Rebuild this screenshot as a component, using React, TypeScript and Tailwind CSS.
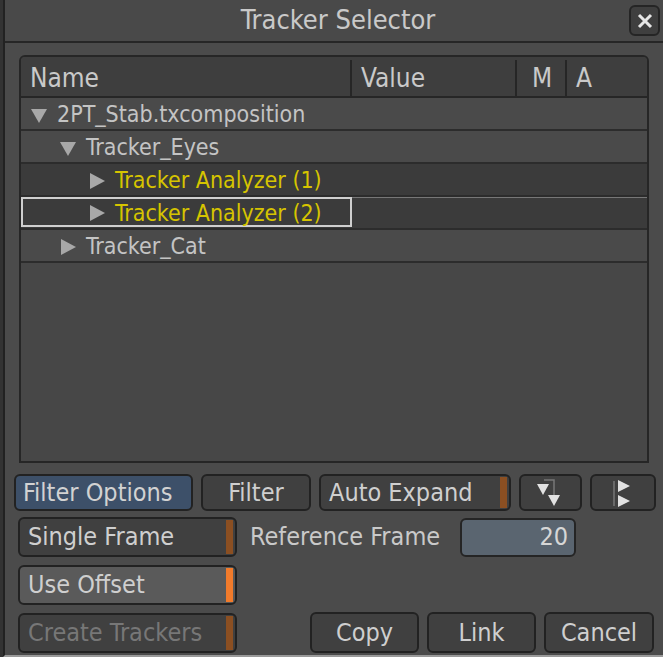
import React from 'react';

type Row = {
  label: string;
  depth: number;
  open: boolean;
  tracker?: boolean;
  selected?: boolean;
};

const rows: Row[] = [
  { label: '2PT_Stab.txcomposition', depth: 0, open: true },
  { label: 'Tracker_Eyes', depth: 1, open: true },
  { label: 'Tracker Analyzer (1)', depth: 2, open: false, tracker: true },
  { label: 'Tracker Analyzer (2)', depth: 2, open: false, tracker: true, selected: true },
  { label: 'Tracker_Cat', depth: 1, open: false },
];

const font = "font-['Liberation_Sans_Narrow','DejaVu_Sans_Condensed',sans-serif]";

const Arrow = ({ open }: { open: boolean }) => (
  <svg width="18" height="18" viewBox="0 0 18 18" className="shrink-0">
    {open ? (
      <polygon points="1,3 17,3 9,17" fill="#a8a8a8" />
    ) : (
      <polygon points="2,1 17,9 2,17" fill="#a8a8a8" />
    )}
  </svg>
);

const Toggle = ({
  label,
  on,
  dim,
  light,
}: {
  label: string;
  on?: boolean;
  dim?: boolean;
  light?: boolean;
}) => (
  <button
    className={`flex h-[40px] w-[219px] shrink-0 items-center justify-between rounded-md border-2 border-[#222] pl-2 pr-[2px] ${
      light ? 'bg-[#5a5a5a]' : 'bg-[#404040]'
    }`}
  >
    <span className={`text-[25px] ${dim ? 'text-[#777]' : 'text-[#cfcfcf]'}`}>{label}</span>
    <span className={`h-[34px] w-[7px] ${on ? 'bg-[#f27b2b]' : 'bg-[#8b4f22]'}`} />
  </button>
);

const Btn = ({ label, w }: { label: string; w: string }) => (
  <button
    className={`flex h-[41px] items-center justify-center rounded-md border-2 border-[#222] bg-[#404040] text-[25px] text-[#cfcfcf] ${w}`}
  >
    {label}
  </button>
);

export default function App() {
  return (
    <div className={`h-[657px] w-[663px] overflow-hidden bg-[#333] pl-[3px] ${font}`}>
      <div className="flex h-full flex-col border-b-2 border-l-2 border-b-[#9a9a9a] border-l-[#222] bg-[#4b4b4b]">
        {/* title bar */}
        <div className="grid h-[43px] shrink-0 grid-cols-[1fr_auto_1fr] items-center border-b-2 border-[#262626] bg-[#494949]">
          <div />
          <div className="pl-[8px] text-[27px] text-[#c9c9c9]">Tracker Selector</div>
          <div className="flex justify-end pr-[3px]">
            <button className="flex h-[31px] w-[31px] items-center justify-center rounded-md border-2 border-[#252525] bg-[#3f3f3f]">
              <svg width="16" height="16" viewBox="0 0 16 16">
                <path d="M2 2 L14 14 M14 2 L2 14" stroke="#e6e6e6" strokeWidth="3" />
              </svg>
            </button>
          </div>
        </div>

        {/* tree */}
        <div className="mx-[14px] mt-[12px] flex h-[408px] flex-col overflow-hidden rounded-t-md border-2 border-[#262626] bg-[#474747]">
          <div className="flex h-[41px] shrink-0 border-b-2 border-[#262626] bg-[#3e3e3e] pt-[3px] text-[26px] text-[#c9c9c9]">
            <div className="flex w-[331px] items-center border-r-2 border-[#262626] pl-[9px]">Name</div>
            <div className="flex w-[165px] items-center border-r-2 border-[#262626] pl-[9px]">Value</div>
            <div className="flex w-[50px] items-center border-r-2 border-[#262626] pl-[15px]">M</div>
            <div className="flex flex-1 items-center pl-[9px]">A</div>
          </div>
          {rows.map((r) => (
            <div
              key={r.label}
              className={`relative h-[33px] shrink-0 border-b-2 border-[#2c2c2c] ${
                r.tracker ? 'bg-[#3b3b3b]' : 'bg-[#4a4a4a]'
              } ${r.selected ? 'border-t border-t-[#777]' : ''}`}
            >
              <div
                className={`flex h-full w-[331px] items-center gap-[9px] pt-[2px] ${
                  r.selected ? 'absolute left-0 top-[-1px] h-[33px] border-2 border-[#cfcfcf]' : ''
                }`}
                style={{ paddingLeft: 9 + r.depth * 29 - (r.selected ? 2 : 0) }}
              >
                <Arrow open={r.open} />
                <span className={`text-[23px] ${r.tracker ? 'text-[#d6c400]' : 'text-[#c4c4c4]'}`}>
                  {r.label}
                </span>
              </div>
            </div>
          ))}
          <div className="flex-1 bg-[#474747]" />
        </div>

        {/* button row */}
        <div className="mt-[11px] flex gap-[8px] pl-[9px]">
          <button className="flex h-[37px] w-[179px] items-center rounded-md border-2 border-[#222] bg-[#3d5069] pl-[7px] text-[25px] text-[#d2d2d2]">
            Filter Options
          </button>
          <button className="flex h-[37px] w-[110px] items-center justify-center rounded-md border-2 border-[#222] bg-[#404040] text-[25px] text-[#cfcfcf]">
            Filter
          </button>
          <button className="flex h-[37px] w-[192px] items-center justify-between rounded-md border-2 border-[#222] bg-[#404040] pl-[8px] pr-[2px]">
            <span className="text-[25px] text-[#cfcfcf]">Auto Expand</span>
            <span className="h-[31px] w-[7px] bg-[#8b4f22]" />
          </button>
          <button className="flex h-[37px] w-[63px] items-center justify-center rounded-md border-2 border-[#222] bg-[#404040]">
            <svg width="34" height="32" viewBox="0 0 34 32">
              <path d="M10 3 H20 V18" stroke="#777" strokeWidth="1.5" fill="none" />
              <polygon points="3,7 15,7 9,18" fill="#e2e2e2" />
              <polygon points="14,18 26,18 20,29" fill="#e2e2e2" />
            </svg>
          </button>
          <button className="flex h-[37px] w-[66px] items-center justify-center rounded-md border-2 border-[#222] bg-[#404040]">
            <svg width="30" height="32" viewBox="0 0 30 32">
              <path d="M6 4 V29" stroke="#777" strokeWidth="1.5" />
              <polygon points="10,3 22,9 10,15" fill="#e2e2e2" />
              <polygon points="10,18 22,24 10,30" fill="#e2e2e2" />
            </svg>
          </button>
        </div>

        {/* single frame row */}
        <div className="mt-[6px] flex items-center pl-[13px]">
          <Toggle label="Single Frame" />
          <span className="ml-[13px] w-[210px] shrink-0 text-[25px] text-[#c9c9c9]">Reference Frame</span>
          <div className="flex h-[39px] w-[116px] items-center justify-end rounded-md border-2 border-[#252525] bg-[#5a6570] pr-[6px] text-[25px] text-[#d6d6d6]">
            20
          </div>
        </div>

        {/* use offset */}
        <div className="mt-[8px] flex pl-[13px]">
          <Toggle label="Use Offset" on light />
        </div>

        {/* bottom row */}
        <div className="mt-[7px] flex items-center pl-[13px]">
          <Toggle label="Create Trackers" dim />
          <div className="ml-[73px] flex gap-[8px]">
            <Btn label="Copy" w="w-[109px]" />
            <Btn label="Link" w="w-[109px]" />
            <Btn label="Cancel" w="w-[110px]" />
          </div>
        </div>
      </div>
    </div>
  );
}
